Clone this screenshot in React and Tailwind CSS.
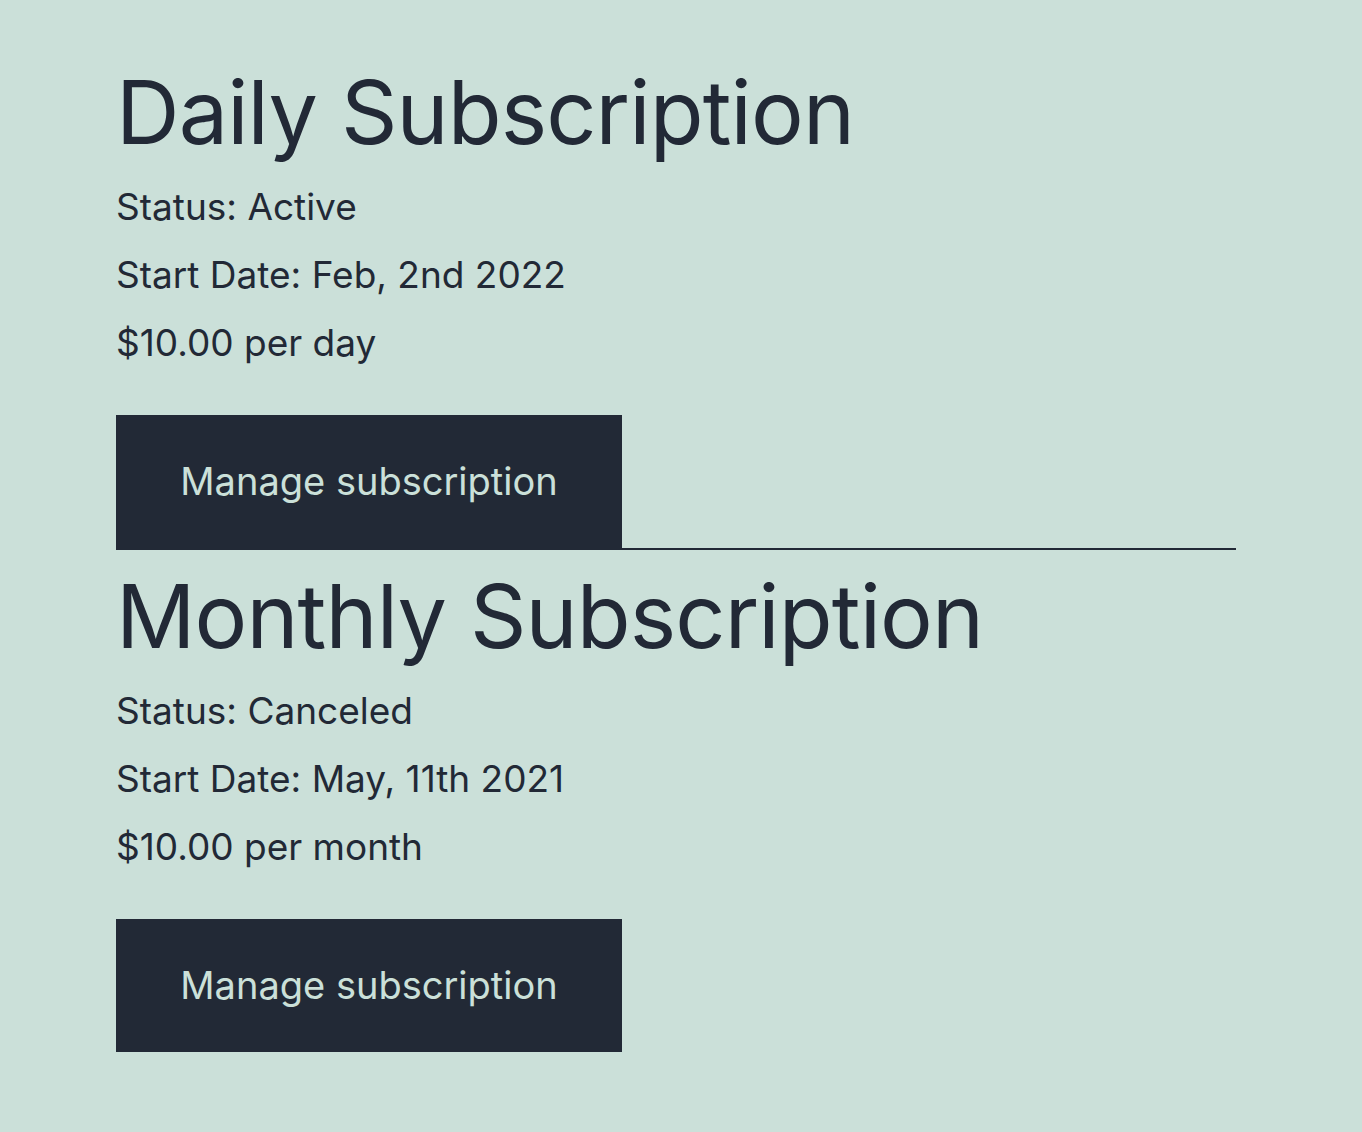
import React from "react";

const SUBS = [
  { name: "Daily Subscription", status: "Active", start: "Feb, 2nd 2022", price: "$10.00 per day" },
  { name: "Monthly Subscription", status: "Canceled", start: "May, 11th 2021", price: "$10.00 per month" },
];

function Subscription({ sub, last }) {
  return (
    <section className={`w-[1120px] pt-[22px] ${last ? "" : "border-b-2 border-[#222936]"}`}>
      <h2 className="text-[88px] leading-[88px] tracking-[-0.01em]">{sub.name}</h2>
      <div className="mt-[17px] text-[37px] leading-[68px]">
        <p>Status: {sub.status}</p>
        <p>Start Date: {sub.start}</p>
        <p>{sub.price}</p>
      </div>
      <button
        type="button"
        className="mt-[38px] block h-[133px] w-[506px] bg-[#222936] text-[38px] text-[#cbe0d9]"
      >
        Manage subscription
      </button>
    </section>
  );
}

export default function App() {
  return (
    <div
      className="min-h-screen bg-[#cbe0d9] pl-[116px] pt-[46px] text-[#222936]"
      style={{ fontFamily: "Inter, 'Noto Sans', sans-serif" }}
    >
      {SUBS.map((s, i) => (
        <Subscription key={s.name} sub={s} last={i === SUBS.length - 1} />
      ))}
    </div>
  );
}
